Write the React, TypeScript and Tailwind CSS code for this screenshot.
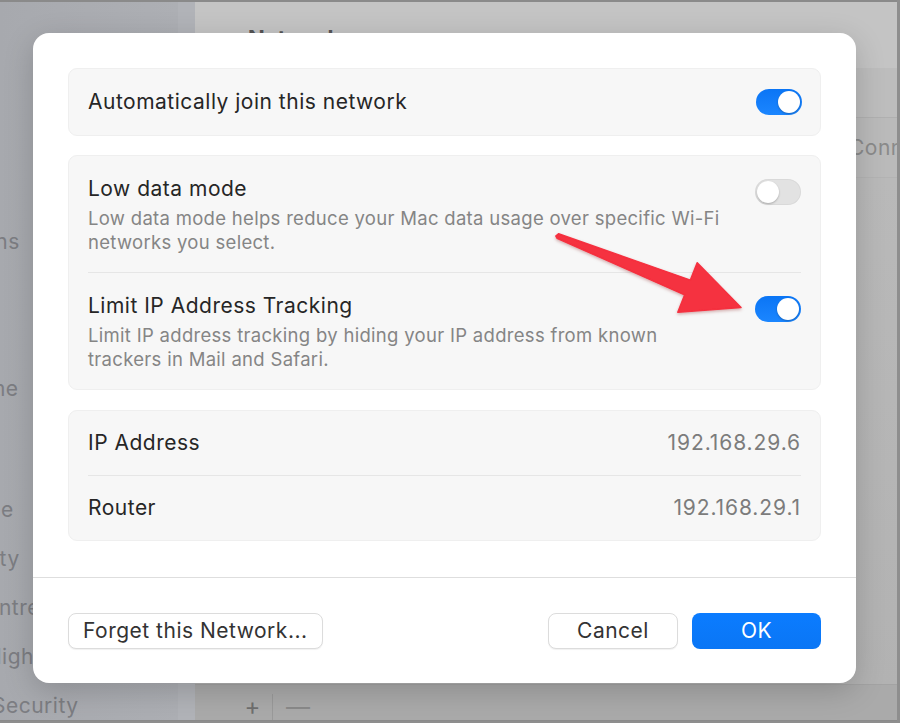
import React from 'react';

const SIDEBAR = [
  { label: 'Network', gapBefore: 0 },
  { label: 'Notifications', gapBefore: 0 },
  { label: 'Sound', gapBefore: 0 },
  { label: 'Focus', gapBefore: 0 },
  { label: 'Screen Time', gapBefore: 0 },
  { label: 'General', gapBefore: 23 },
  { label: 'Appearance', gapBefore: 0 },
  { label: 'Accessibility', gapBefore: 0 },
  { label: 'Control Centre', gapBefore: 0 },
  { label: 'Siri & Spotlight', gapBefore: 0 },
  { label: 'Privacy & Security', gapBefore: 0 },
];

function Toggle({ on }: { on: boolean }) {
  return (
    <div
      className={
        on
          ? 'flex h-[26px] w-[46px] shrink-0 items-center justify-end rounded-full bg-gradient-to-b from-[#0a75f5] to-[#1b86ff] p-[2px]'
          : 'flex h-[26px] w-[46px] shrink-0 items-center justify-start rounded-full bg-[#e2e2e2] p-[2px] shadow-[inset_0_0_0_1px_rgba(0,0,0,0.04)]'
      }
    >
      <div className="h-[22px] w-[22px] rounded-full bg-white shadow-[0_1px_2px_rgba(0,0,0,0.25)]" />
    </div>
  );
}

function ToggleRow({
  title,
  body,
  on,
  className,
}: {
  title: string;
  body: string;
  on: boolean;
  className?: string;
}) {
  return (
    <div className={`flex items-start justify-between gap-4 ${className ?? ''}`}>
      <div className="min-w-0">
        <p className="text-[21px] leading-[28px] tracking-[0.5px] text-[#262626]">{title}</p>
        <p className="mt-[3px] max-w-[645px] text-[18.5px] leading-[24px] tracking-[0.3px] text-[#858585]">
          {body}
        </p>
      </div>
      <div className="mt-1">
        <Toggle on={on} />
      </div>
    </div>
  );
}

function InfoRow({ label, value }: { label: string; value: string }) {
  return (
    <div className="flex h-16 items-center justify-between">
      <span className="text-[21px] tracking-[0.5px] text-[#262626]">{label}</span>
      <span className="text-[21px] tracking-[0.9px] text-[#7c7c7c]">{value}</span>
    </div>
  );
}

function Arrow() {
  return (
    <svg className="pointer-events-none absolute left-0 top-0" width="900" height="723" aria-hidden>
      <defs>
        <filter id="arrowShadow" x="-10%" y="-10%" width="120%" height="130%">
          <feDropShadow dx="0" dy="1.5" stdDeviation="1.5" floodColor="#7a0010" floodOpacity="0.3" />
        </filter>
      </defs>
      <polygon
        points="558.5,233.8 690.4,280.1 697.2,262.8 741,307.5 677.8,312.2 684.6,294.9 557,238.2 555.8,236"
        fill="#f5303f"
        strokeLinejoin="round"
        stroke="#f5303f"
        strokeWidth="1.5"
        filter="url(#arrowShadow)"
      />
    </svg>
  );
}

export default function App() {
  return (
    <div className="relative h-[723px] w-[900px] overflow-hidden bg-[#8e8e8e] font-['Inter','Liberation_Sans',sans-serif]">
      {/* dimmed settings window behind the sheet */}
      <div className="flex h-[721px] w-[897px] border-b border-t-2 border-[#8a8a8a]">
        <aside className="w-[178px] overflow-hidden bg-gradient-to-r from-[#a7a9ae] to-[#adafb4]">
          <ul className="ml-[-112px] mt-[177px] flex w-[300px] flex-col">
            {SIDEBAR.map((item) => (
              <li
                key={item.label}
                style={{ marginTop: item.gapBefore }}
                className="h-[49px] whitespace-nowrap text-[21px] leading-[28px] tracking-[0.5px] text-[#7c7d82]"
              >
                {item.label}
              </li>
            ))}
          </ul>
        </aside>
        <div className="w-[17px] bg-[#b1b3b8]" />
        <main className="flex flex-1 flex-col overflow-hidden bg-[#bababa]">
          <header className="h-[66px] bg-[#c4c4c4] pl-[53px] pt-[20px]">
            <h1 className="text-[22px] font-bold text-[#555]">Network</h1>
          </header>
          <div className="h-[50px] border-b border-[#b0b0b0] bg-[#bdbdbd]" />
          <div className="flex h-[60px] items-center border-b border-[#b3b3b3] pl-[654px]">
            <span className="whitespace-nowrap text-[21px] tracking-[0.5px] text-[#8a8a8a]">Connected</span>
          </div>
          <div className="flex-1 bg-gradient-to-b from-[#b9b9b9] to-[#b2b2b2]" />
          <footer className="flex h-[36px] items-end border-t border-[#a3a3a3] bg-[#aaaaaa] pl-[38px]">
            <span className="w-[40px] border-r border-[#9a9a9a] text-center text-[24px] leading-[26px] text-[#6f6f6f]">+</span>
            <span className="w-[50px] text-center text-[24px] leading-[26px] text-[#8a8a8a]">—</span>
          </footer>
        </main>
      </div>

      {/* sheet */}
      <div className="absolute left-[33px] top-[33px] flex h-[650px] w-[823px] flex-col rounded-[16px] bg-white shadow-[0_8px_30px_rgba(0,0,0,0.18)]">
        <div className="flex flex-col gap-[19px] px-[35px] pt-[35px]">
          <section className="flex h-[68px] items-center justify-between rounded-[9px] border border-[#efefef] bg-[#f7f7f7] pl-[19px] pr-[18px]">
            <span className="text-[21px] tracking-[0.5px] text-[#262626]">Automatically join this network</span>
            <Toggle on />
          </section>

          <section className="rounded-[9px] border border-[#efefef] bg-[#f7f7f7] px-[19px]">
            <ToggleRow
              className="pb-[18px] pt-[19px]"
              title="Low data mode"
              body="Low data mode helps reduce your Mac data usage over specific Wi-Fi networks you select."
              on={false}
            />
            <div className="h-px bg-[#e6e6e6]" />
            <ToggleRow
              className="pb-[18px] pt-[19px]"
              title="Limit IP Address Tracking"
              body="Limit IP address tracking by hiding your IP address from known trackers in Mail and Safari."
              on
            />
          </section>

          <section className="mt-px rounded-[9px] border border-[#efefef] bg-[#f7f7f7] px-[19px]">
            <InfoRow label="IP Address" value="192.168.29.6" />
            <div className="h-px bg-[#e6e6e6]" />
            <InfoRow label="Router" value="192.168.29.1" />
          </section>
        </div>

        <div className="mt-auto border-t border-[#dedede] px-[35px] pb-[34px] pt-[35px]">
          <div className="flex items-center justify-between">
            <button
              type="button"
              className="h-[36px] rounded-[8px] border border-[#dcdcdc] bg-white px-[14px] text-[21px] tracking-[0.5px] text-[#333] shadow-[0_1px_1px_rgba(0,0,0,0.06)]"
            >
              Forget this Network...
            </button>
            <div className="flex gap-[14px]">
              <button
                type="button"
                className="h-[36px] w-[130px] rounded-[8px] border border-[#dcdcdc] bg-white text-[21px] tracking-[0.5px] text-[#333] shadow-[0_1px_1px_rgba(0,0,0,0.06)]"
              >
                Cancel
              </button>
              <button
                type="button"
                className="h-[36px] w-[129px] rounded-[8px] bg-gradient-to-b from-[#0b7cff] to-[#0a76f5] text-[21px] tracking-[0.5px] text-white"
              >
                OK
              </button>
            </div>
          </div>
        </div>
      </div>

      <Arrow />
    </div>
  );
}
